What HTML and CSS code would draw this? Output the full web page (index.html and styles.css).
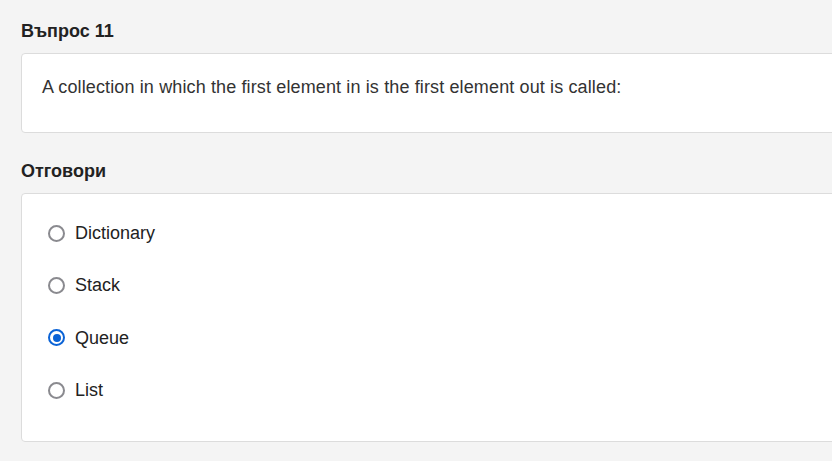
FILE: index.html
```html
<!DOCTYPE html>
<html>
<head>
<meta charset="utf-8">
<link rel="stylesheet" href="styles.css">
</head>
<body>
<main class="page">
  <h2 class="title">Въпрос 11</h2>
  <section class="card question">
    <p>A collection in which the first element in is the first element out is called:</p>
  </section>
  <h2 class="title answers-title">Отговори</h2>
  <section class="card answers">
    <label class="option"><span class="radio"></span><span>Dictionary</span></label>
    <label class="option"><span class="radio"></span><span>Stack</span></label>
    <label class="option"><span class="radio checked"></span><span>Queue</span></label>
    <label class="option"><span class="radio"></span><span>List</span></label>
  </section>
</main>
</body>
</html>
```
FILE: styles.css
```css
html, body {
  margin: 0;
  padding: 0;
  overflow: hidden;
  background: #f4f4f4;
}
body {
  font-family: "Liberation Sans", Arial, sans-serif;
  color: #222;
}
.page {
  padding: 20px 0 0 21px;
  width: 880px;
}
.title {
  margin: 0;
  font-size: 18px;
  font-weight: bold;
  line-height: 22px;
  color: #222;
}
.card {
  background: #fff;
  border: 1px solid #dcdcdc;
  border-radius: 4px;
}
.question {
  margin-top: 11px;
  height: 80px;
  box-sizing: border-box;
  padding: 22px 20px 0 20px;
}
.question p {
  margin: 0;
  font-size: 18px;
  letter-spacing: 0.13px;
  line-height: 22px;
  color: #333;
}
.answers-title {
  margin-top: 27px;
}
.answers {
  margin-top: 11px;
  padding: 27px 0 40px 26px;
  display: flex;
  flex-direction: column;
  gap: 28.4px;
  height: 249px;
  box-sizing: border-box;
}
.option {
  display: flex;
  align-items: center;
  gap: 10px;
  font-size: 18px;
  line-height: 24px;
  color: #222;
}
.radio {
  width: 13px;
  height: 13px;
  border: 2px solid #8a8a8f;
  border-radius: 50%;
  box-sizing: content-box;
  flex: none;
  position: relative;
}
.radio.checked {
  border-color: #0b63d6;
}
.radio.checked::after {
  content: "";
  position: absolute;
  left: 2.5px;
  top: 2.5px;
  width: 8px;
  height: 8px;
  border-radius: 50%;
  background: #0b63d6;
}
```
